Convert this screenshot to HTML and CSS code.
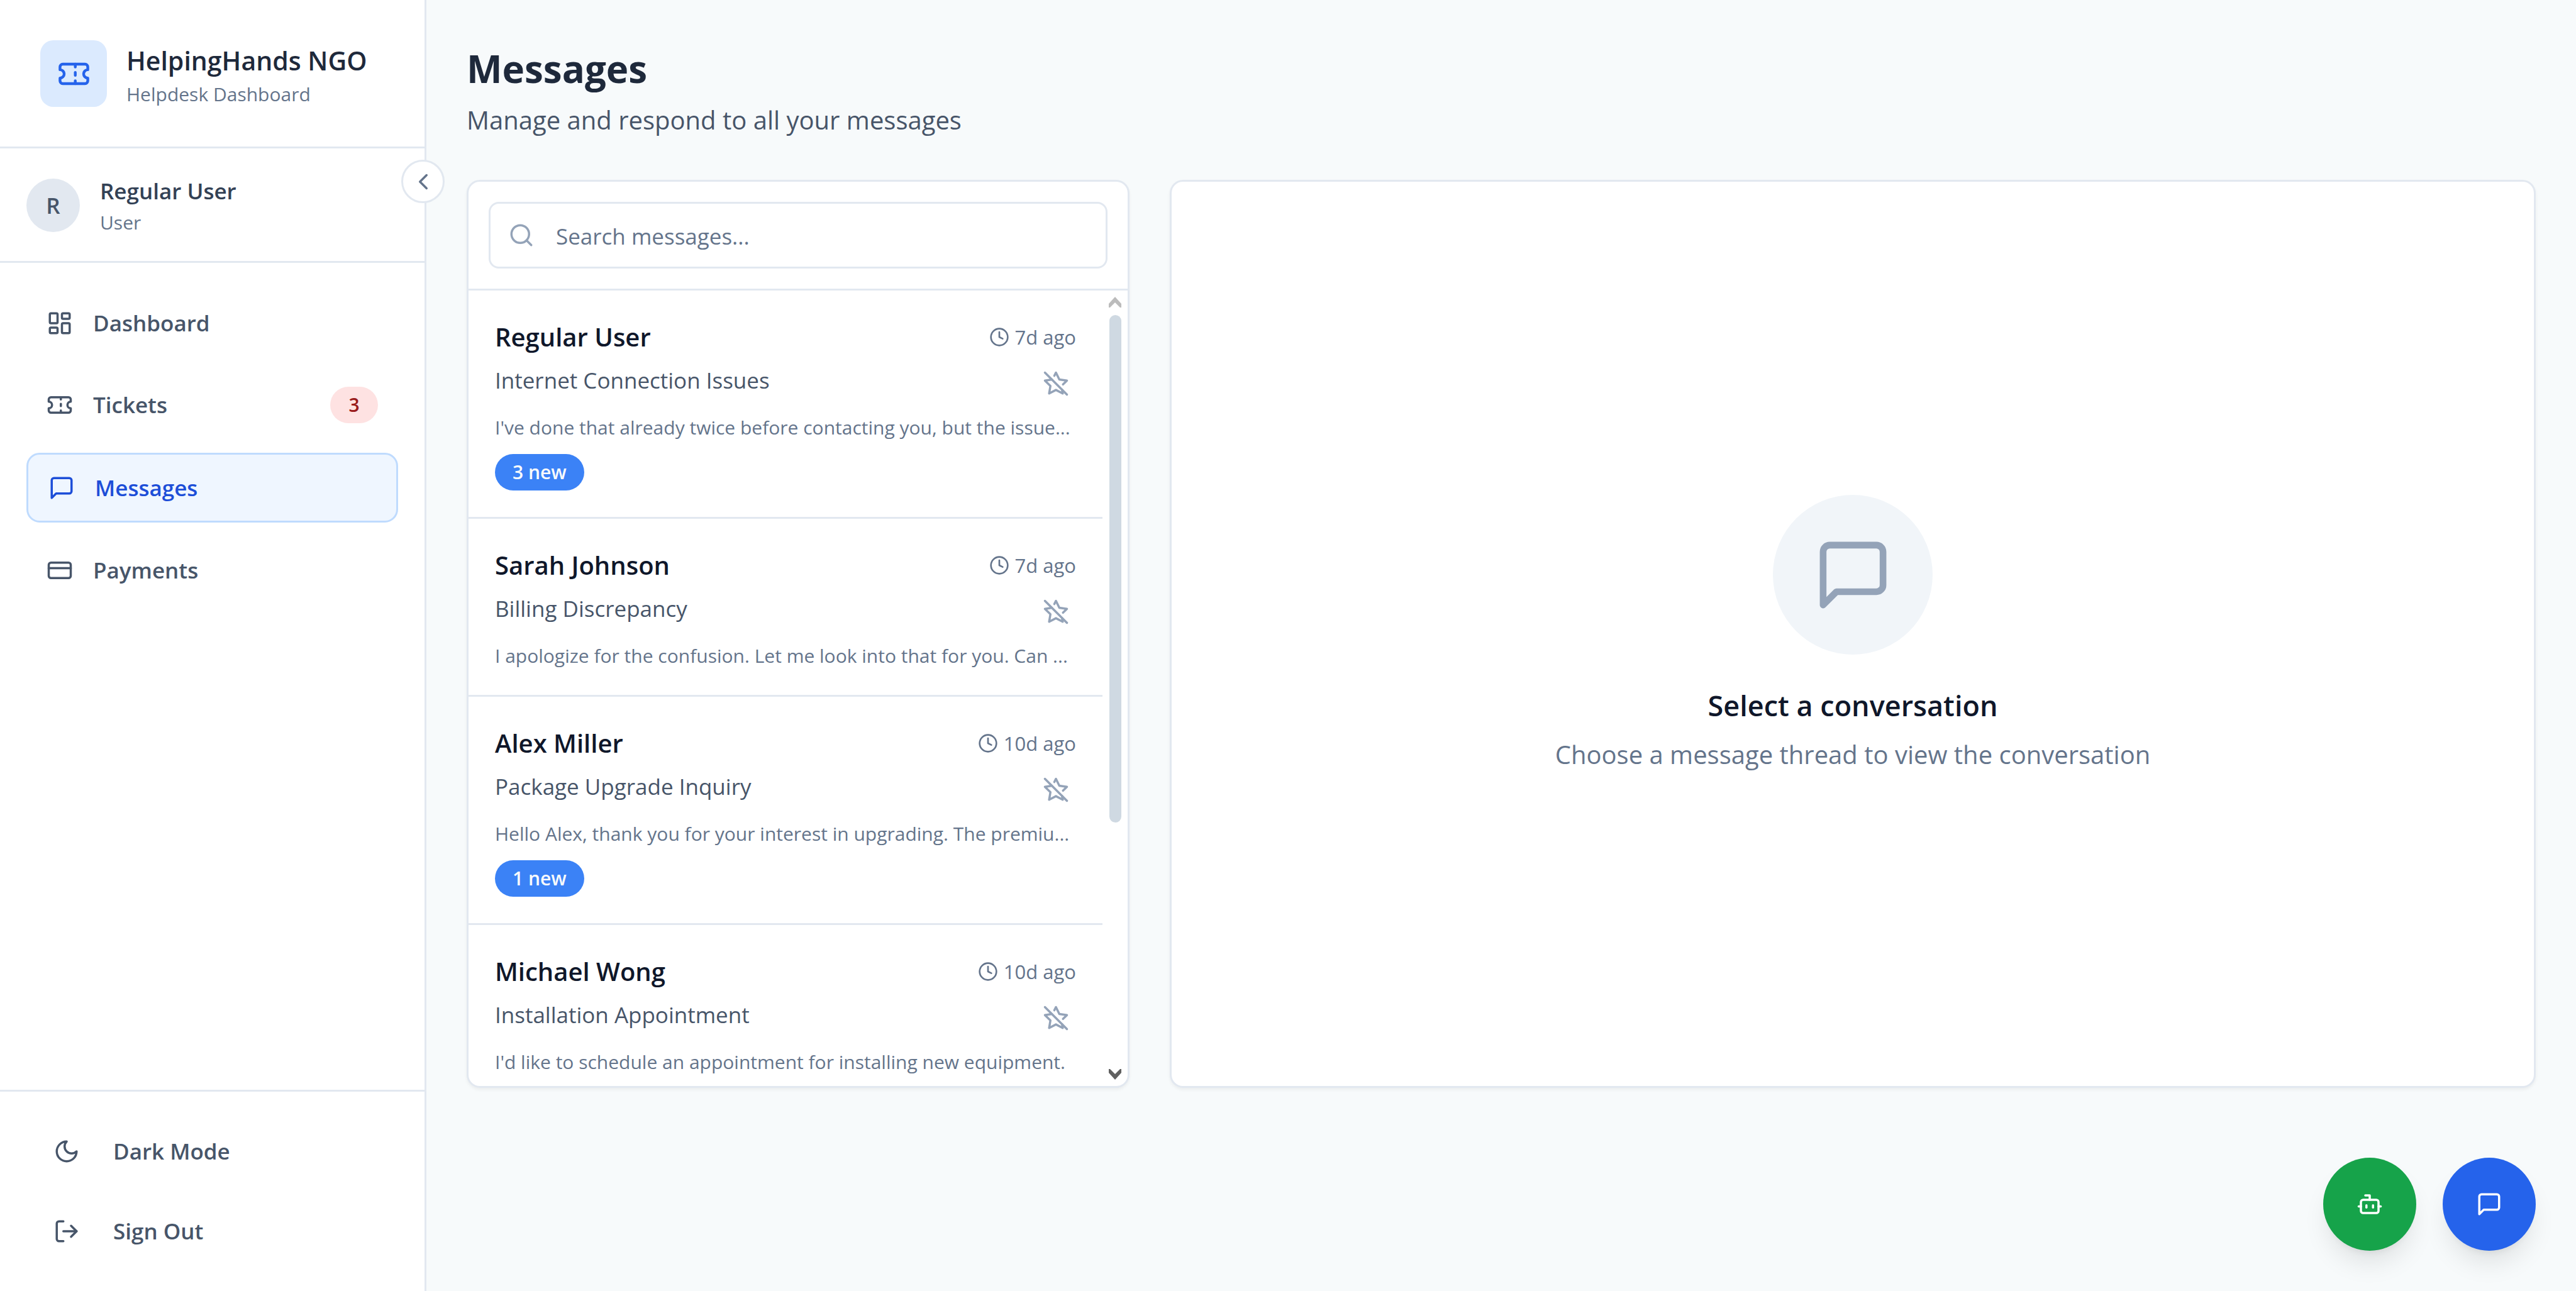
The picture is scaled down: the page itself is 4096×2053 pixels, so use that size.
FILE: index.html
```html
<!DOCTYPE html>
<html lang="en">
<head>
<meta charset="utf-8">
<meta name="viewport" content="width=device-width, initial-scale=1">
<title>Messages - HelpingHands NGO</title>
<link rel="stylesheet" href="styles.css">
</head>
<body>
<svg class="sprite" aria-hidden="true">
  <symbol id="ticket" viewBox="0 0 24 24"><path d="M2 9a3 3 0 0 1 0 6v2a2 2 0 0 0 2 2h16a2 2 0 0 0 2-2v-2a3 3 0 0 1 0-6V7a2 2 0 0 0-2-2H4a2 2 0 0 0-2 2Z"/><path d="M13 5v2"/><path d="M13 17v2"/><path d="M13 11v2"/></symbol>
  <symbol id="message" viewBox="0 0 24 24"><path d="M21 15a2 2 0 0 1-2 2H7l-4 4V5a2 2 0 0 1 2-2h14a2 2 0 0 1 2 2z"/></symbol>
  <symbol id="clock" viewBox="0 0 24 24"><circle cx="12" cy="12" r="10"/><path d="M12 6v6l4 2"/></symbol>
  <symbol id="star-off" viewBox="0 0 24 24"><path d="M8.34 8.34 2 9.27l5 4.87L5.82 21 12 17.77 18.18 21l-.59-3.43"/><path d="M18.42 12.76 22 9.27l-6.91-1L12 2l-1.44 2.91"/><path d="m2 2 20 20"/></symbol>
</svg>
<div class="app">
  <aside class="sidebar">
    <header class="brand">
      <span class="brand-logo"><svg class="icon icon-lg"><use href="#ticket"/></svg></span>
      <div class="brand-text">
        <p class="brand-name">HelpingHands NGO</p>
        <p class="brand-sub">Helpdesk Dashboard</p>
      </div>
    </header>
    <section class="profile">
      <span class="avatar">R</span>
      <div>
        <p class="profile-name">Regular User</p>
        <p class="profile-role">User</p>
      </div>
    </section>
    <nav class="nav">
      <a class="nav-item" href="#dashboard"><svg class="icon" viewBox="0 0 24 24"><rect x="3" y="3" width="7" height="9" rx="1"/><rect x="14" y="3" width="7" height="5" rx="1"/><rect x="14" y="12" width="7" height="9" rx="1"/><rect x="3" y="16" width="7" height="5" rx="1"/></svg><span>Dashboard</span></a>
      <a class="nav-item" href="#tickets"><svg class="icon"><use href="#ticket"/></svg><span>Tickets</span><span class="nav-count">3</span></a>
      <a class="nav-item active" href="#messages" aria-current="page"><svg class="icon"><use href="#message"/></svg><span>Messages</span></a>
      <a class="nav-item" href="#payments"><svg class="icon" viewBox="0 0 24 24"><rect x="2" y="5" width="20" height="14" rx="2"/><path d="M2 10h20"/></svg><span>Payments</span></a>
    </nav>
    <footer class="sidebar-footer">
      <button class="foot-btn" type="button"><svg class="icon" viewBox="0 0 24 24"><path d="M12 3a6 6 0 0 0 9 9 9 9 0 1 1-9-9Z"/></svg><span>Dark Mode</span></button>
      <button class="foot-btn" type="button"><svg class="icon" viewBox="0 0 24 24"><path d="M9 21H5a2 2 0 0 1-2-2V5a2 2 0 0 1 2-2h4"/><path d="m16 17 5-5-5-5"/><path d="M21 12H9"/></svg><span>Sign Out</span></button>
    </footer>
    <button class="collapse" type="button" aria-label="Collapse sidebar"><svg class="icon" viewBox="0 0 24 24"><path d="m15 18-6-6 6-6"/></svg></button>
  </aside>

  <main class="main">
    <h1 class="title">Messages</h1>
    <p class="subtitle">Manage and respond to all your messages</p>
    <div class="panels">
      <section class="panel threads">
        <div class="search">
          <label class="search-box">
            <svg class="icon" viewBox="0 0 24 24"><circle cx="11" cy="11" r="8"/><path d="m21 21-4.3-4.3"/></svg>
            <input class="search-input" type="text" placeholder="Search messages..." aria-label="Search messages">
          </label>
        </div>
        <div class="scroller">
          <ul class="thread-list">
            <li class="thread">
              <div class="row"><h2 class="name">Regular User</h2><span class="time"><svg class="icon icon-sm"><use href="#clock"/></svg>7d ago</span></div>
              <div class="row subject-row"><p class="subject">Internet Connection Issues</p><button class="star" type="button" aria-label="Star"><svg class="icon"><use href="#star-off"/></svg></button></div>
              <p class="excerpt">I've done that already twice before contacting you, but the issue...</p>
              <span class="new">3 new</span>
            </li>
            <li class="thread">
              <div class="row"><h2 class="name">Sarah Johnson</h2><span class="time"><svg class="icon icon-sm"><use href="#clock"/></svg>7d ago</span></div>
              <div class="row subject-row"><p class="subject">Billing Discrepancy</p><button class="star" type="button" aria-label="Star"><svg class="icon"><use href="#star-off"/></svg></button></div>
              <p class="excerpt">I apologize for the confusion. Let me look into that for you. Can ...</p>
            </li>
            <li class="thread">
              <div class="row"><h2 class="name">Alex Miller</h2><span class="time"><svg class="icon icon-sm"><use href="#clock"/></svg>10d ago</span></div>
              <div class="row subject-row"><p class="subject">Package Upgrade Inquiry</p><button class="star" type="button" aria-label="Star"><svg class="icon"><use href="#star-off"/></svg></button></div>
              <p class="excerpt">Hello Alex, thank you for your interest in upgrading. The premiu...</p>
              <span class="new">1 new</span>
            </li>
            <li class="thread">
              <div class="row"><h2 class="name">Michael Wong</h2><span class="time"><svg class="icon icon-sm"><use href="#clock"/></svg>10d ago</span></div>
              <div class="row subject-row"><p class="subject">Installation Appointment</p><button class="star" type="button" aria-label="Star"><svg class="icon"><use href="#star-off"/></svg></button></div>
              <p class="excerpt">I'd like to schedule an appointment for installing new equipment.</p>
            </li>
          </ul>
          <div class="scrollbar" aria-hidden="true">
            <svg class="arrow arrow-up" viewBox="0 0 20 20"><path d="M10 1 20 12v6h-2l-8-8-8 8H0v-6z"/></svg>
            <div class="track"><div class="thumb"></div></div>
            <svg class="arrow arrow-down" viewBox="0 0 20 20"><path d="M10 19 20 8V2h-2l-8 8-8-8H0v6z"/></svg>
          </div>
        </div>
      </section>
      <section class="panel empty">
        <span class="empty-icon"><svg class="icon icon-xl"><use href="#message"/></svg></span>
        <h2 class="empty-title">Select a conversation</h2>
        <p class="empty-text">Choose a message thread to view the conversation</p>
      </section>
    </div>
  </main>

  <div class="fabs">
    <button class="fab fab-bot" type="button" aria-label="Assistant"><svg class="icon" viewBox="0 0 24 24"><path d="M12 8V4H8"/><rect x="4" y="8" width="16" height="12" rx="2"/><path d="M2 14h2"/><path d="M20 14h2"/><path d="M15 13v2"/><path d="M9 13v2"/></svg></button>
    <button class="fab fab-chat" type="button" aria-label="Chat"><svg class="icon"><use href="#message"/></svg></button>
  </div>
</div>
</body>
</html>
```
FILE: styles.css
```css
*, *::before, *::after { box-sizing: border-box; }

body {
  margin: 0;
  background: #f7fafb;
  color: #0f172a;
  font-family: "Open Sans", "Noto Sans", sans-serif;
  font-size: 35px;
  line-height: 52px;
}

h1, h2, p, ul { margin: 0; padding: 0; }
ul { list-style: none; }
button { font: inherit; color: inherit; border: 0; padding: 0; background: none; cursor: pointer; }
a { color: inherit; text-decoration: none; }

.sprite { display: none; }

.icon {
  flex: none;
  display: block;
  width: 42px;
  height: 42px;
  fill: none;
  stroke: currentColor;
  stroke-width: 2;
  stroke-linecap: round;
  stroke-linejoin: round;
}
.icon-sm { width: 32px; height: 32px; }
.icon-lg { width: 53px; height: 53px; }
.icon-xl { width: 127px; height: 127px; }

.app { display: flex; min-height: 100vh; }

/* Sidebar */
.sidebar {
  position: relative;
  flex: none;
  display: flex;
  flex-direction: column;
  width: 678px;
  height: 100vh;
  background: #fff;
  border-right: 3px solid #e2e8f0;
}

.brand {
  display: flex;
  align-items: center;
  gap: 31px;
  padding: 63px 64px 62px;
  border-bottom: 3px solid #e2e8f0;
}
.brand-logo {
  display: grid;
  place-items: center;
  width: 106px;
  height: 106px;
  border-radius: 21px;
  background: #dbeafe;
  color: #2563eb;
}
.brand-text { padding-top: 5px; }
.brand-name { font-size: 41px; line-height: 56px; font-weight: 600; color: #1e293b; white-space: nowrap; }
.brand-sub { margin-top: 5px; font-size: 30px; line-height: 42px; color: #64748b; }

.profile {
  display: flex;
  align-items: center;
  gap: 32px;
  height: 182px;
  padding: 2px 42px 0;
  border-bottom: 3px solid #e2e8f0;
}
.avatar {
  display: grid;
  place-items: center;
  width: 85px;
  height: 85px;
  border-radius: 50%;
  background: #e2e8f0;
  color: #475569;
  font-weight: 600;
}
.profile-name { font-weight: 600; color: #334155; }
.profile-role { margin-top: 3px; font-size: 30px; line-height: 42px; color: #64748b; }

.nav {
  flex: 1;
  display: flex;
  flex-direction: column;
  gap: 22px;
  padding: 42px;
}
.nav-item {
  display: flex;
  align-items: center;
  gap: 32px;
  height: 108px;
  padding: 0 32px;
  border-radius: 21px;
  color: #475569;
  font-weight: 600;
}
.nav-item.active {
  height: 111px;
  border: 3px solid #bfdbfe;
  background: #eff6ff;
  color: #1d4ed8;
}
.nav-count {
  margin-left: auto;
  min-width: 76px;
  border-radius: 29px;
  background: #fee2e2;
  color: #991b1b;
  font-size: 30px;
  line-height: 58px;
  text-align: center;
}

.sidebar-footer {
  display: flex;
  flex-direction: column;
  gap: 21px;
  padding: 42px;
  border-top: 3px solid #e2e8f0;
}
.foot-btn {
  display: flex;
  align-items: center;
  gap: 53px;
  height: 106px;
  padding: 0 43px;
  color: #475569;
  font-weight: 600;
}

.collapse {
  position: absolute;
  top: 254px;
  right: -32px;
  display: grid;
  place-items: center;
  width: 69px;
  height: 69px;
  border: 3px solid #e2e8f0;
  border-radius: 50%;
  background: #fff;
  color: #64748b;
}

/* Main column */
.main { flex: 1; min-width: 0; padding: 64px; }
.title { font-size: 60px; line-height: 90px; font-weight: 700; color: #1e293b; }
.subtitle { margin: 5px 0 63px; font-size: 40px; line-height: 64px; color: #475569; }

.panels {
  display: grid;
  grid-template-columns: repeat(3, minmax(0, 1fr));
  gap: 64px;
  height: calc(100vh - 609px);
}
.panel {
  display: flex;
  flex-direction: column;
  min-height: 0;
  overflow: hidden;
  border: 3px solid #e2e8f0;
  border-radius: 21px;
  background: #fff;
  box-shadow: 0 3px 5px rgba(0, 0, 0, 0.05);
}

.search { padding: 32px; border-bottom: 3px solid #e2e8f0; }
.search-box {
  display: flex;
  align-items: center;
  gap: 34px;
  height: 106px;
  padding: 0 28px;
  border: 3px solid #e2e8f0;
  border-radius: 16px;
  color: #94a3b8;
}
.search-input {
  flex: 1;
  min-width: 0;
  border: 0;
  outline: 0;
  padding: 4px 0 0;
  background: none;
  font: inherit;
  color: #0f172a;
}
.search-input::placeholder { color: #64748b; opacity: 1; }

.scroller { flex: 1; min-height: 0; display: flex; }
.thread-list { flex: 1; min-width: 0; overflow: hidden; }
.thread { padding: 42px; border-bottom: 3px solid #e2e8f0; }
.row { display: flex; align-items: center; justify-content: space-between; }
.name { font-size: 40px; line-height: 64px; font-weight: 600; }
.time { display: flex; align-items: center; gap: 9px; font-size: 31px; line-height: 42px; color: #64748b; }
.subject-row { height: 84px; }
.subject { align-self: flex-start; margin-top: 11px; color: #475569; }
.star { padding: 11px; color: #94a3b8; }
.excerpt { margin-top: 8px; font-size: 30px; line-height: 40px; color: #64748b; white-space: nowrap; }
.new {
  display: inline-block;
  margin-top: 22px;
  padding: 0 28px;
  border-radius: 29px;
  background: #3b82f6;
  color: #f8fafc;
  font-size: 30px;
  line-height: 58px;
  font-weight: 600;
  vertical-align: top;
}

.scrollbar { flex: none; display: flex; flex-direction: column; align-items: center; width: 40px; padding: 9px 0; }
.arrow { width: 20px; height: 20px; }
.arrow-up { fill: #bcbcbc; }
.arrow-down { fill: #606060; }
.track { flex: 1; width: 19px; padding: 10px 0; }
.thumb { height: 68%; border-radius: 10px; background: #cfd9e2; }

.empty { grid-column: span 2; align-items: center; justify-content: center; }
.empty-icon {
  display: grid;
  place-items: center;
  width: 254px;
  height: 254px;
  margin-bottom: 44px;
  border-radius: 50%;
  background: #f1f5f9;
  color: #94a3b8;
}
.empty-title { font-size: 45px; line-height: 74px; font-weight: 600; }
.empty-text { margin-top: 12px; font-size: 40px; line-height: 58px; color: #64748b; }

.fabs { position: fixed; right: 64px; bottom: 64px; display: flex; gap: 42px; }
.fab {
  display: grid;
  place-items: center;
  width: 148px;
  height: 148px;
  border-radius: 50%;
  color: #fff;
  box-shadow: 0 26px 40px -8px rgba(0, 0, 0, 0.1), 0 11px 16px -11px rgba(0, 0, 0, 0.1);
}
.fab-bot { background: #16a34a; }
.fab-chat { background: #2563eb; }
```
